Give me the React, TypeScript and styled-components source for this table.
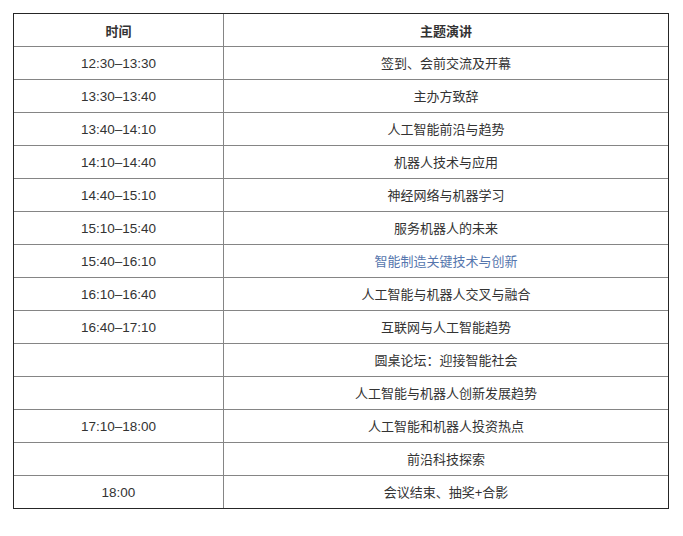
import styled, { createGlobalStyle } from 'styled-components';

const GlobalStyle = createGlobalStyle`
  body {
    margin: 0;
    background: #ffffff;
    font-family: "Liberation Sans", "Noto Sans CJK SC", sans-serif;
  }
`;

const Page = styled.div`
  padding: 13px 14px 0 13px;
`;

const Table = styled.table`
  width: 656px;
  border-collapse: separate;
  border-spacing: 0;
  border: 1px solid #262626;
  table-layout: fixed;
`;

const Cell = styled.td<{ $accent?: boolean; $time?: boolean; $last?: boolean }>`
  height: ${({ $last }) => ($last ? '32px' : '33px')};
  padding: 1px 0 0;
  box-sizing: border-box;
  border-right: ${({ $time }) => ($time ? '1px solid #858585' : 'none')};
  border-bottom: ${({ $last }) => ($last ? 'none' : '1px solid #858585')};
  text-align: center;
  vertical-align: middle;
  font-size: ${({ $time }) => ($time ? '13.5px' : '13px')};
  line-height: 18px;
  color: ${({ $accent }) => ($accent ? '#5576ad' : '#333333')};
`;

const HeadCell = styled.th<{ $time?: boolean }>`
  height: 33px;
  padding: 1px 0 0;
  box-sizing: border-box;
  border-right: ${({ $time }) => ($time ? '1px solid #858585' : 'none')};
  border-bottom: 1px solid #858585;
  text-align: center;
  vertical-align: middle;
  font-size: 13px;
  font-weight: 600;
  color: #333333;
`;

type Session = {
  time: string;
  topic: string;
  accent?: boolean;
};

const sessions: Session[] = [
  { time: '12:30–13:30', topic: '签到、会前交流及开幕' },
  { time: '13:30–13:40', topic: '主办方致辞' },
  { time: '13:40–14:10', topic: '人工智能前沿与趋势' },
  { time: '14:10–14:40', topic: '机器人技术与应用' },
  { time: '14:40–15:10', topic: '神经网络与机器学习' },
  { time: '15:10–15:40', topic: '服务机器人的未来' },
  { time: '15:40–16:10', topic: '智能制造关键技术与创新', accent: true },
  { time: '16:10–16:40', topic: '人工智能与机器人交叉与融合' },
  { time: '16:40–17:10', topic: '互联网与人工智能趋势' },
  { time: '', topic: '圆桌论坛：迎接智能社会' },
  { time: '', topic: '人工智能与机器人创新发展趋势' },
  { time: '17:10–18:00', topic: '人工智能和机器人投资热点' },
  { time: '', topic: '前沿科技探索' },
  { time: '18:00', topic: '会议结束、抽奖+合影' },
];

function App() {
  return (
    <Page>
      <GlobalStyle />
      <Table>
        <colgroup>
          <col style={{ width: 210 }} />
          <col />
        </colgroup>
        <thead>
          <tr>
            <HeadCell $time>时间</HeadCell>
            <HeadCell>主题演讲</HeadCell>
          </tr>
        </thead>
        <tbody>
          {sessions.map((s, i) => {
            const last = i === sessions.length - 1;
            return (
              <tr key={i}>
                <Cell $time $last={last}>{s.time}</Cell>
                <Cell $accent={s.accent} $last={last}>{s.topic}</Cell>
              </tr>
            );
          })}
        </tbody>
      </Table>
    </Page>
  );
}

export default App;
